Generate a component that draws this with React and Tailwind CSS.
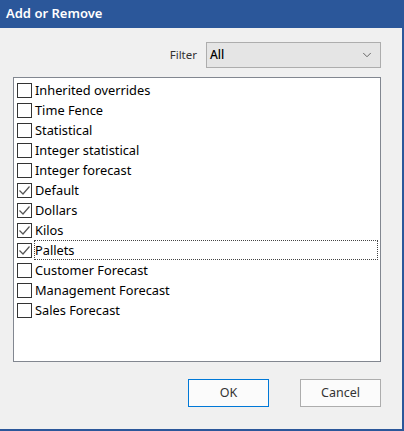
import { ChevronDown } from 'lucide-react'

const ITEMS = [
  { label: 'Inherited overrides', checked: false },
  { label: 'Time Fence', checked: false },
  { label: 'Statistical', checked: false },
  { label: 'Integer statistical', checked: false },
  { label: 'Integer forecast', checked: false },
  { label: 'Default', checked: true },
  { label: 'Dollars', checked: true },
  { label: 'Kilos', checked: true },
  { label: 'Pallets', checked: true, focused: true },
  { label: 'Customer Forecast', checked: false },
  { label: 'Management Forecast', checked: false },
  { label: 'Sales Forecast', checked: false },
]

function Check({ checked }) {
  return (
    <div className="w-[15px] h-[15px] shrink-0 border border-[#333] bg-white flex items-center justify-center">
      {checked && (
        <svg width="13" height="13" viewBox="0 0 13 13">
          <path d="M1.5 6.5 L5 10 L11.5 2.5" fill="none" stroke="#555" strokeWidth="1.2" />
        </svg>
      )}
    </div>
  )
}

export default function App() {
  return (
    <div className="w-[404px] h-[431px] bg-[#f0f0f0] flex flex-col font-['Noto_Sans',sans-serif] border-r-2 border-b-2 border-[#2b579a] overflow-hidden">
      <div className="h-[28px] shrink-0 bg-[#2b579a] flex items-center pl-[6px] text-white text-[13px] font-semibold">
        Add or Remove
      </div>
      <div className="flex-1 flex flex-col pl-[13px] pr-[21px]">
        <div className="flex items-center justify-end gap-[9px] mt-[14px] h-[26px]">
          <span className="text-[11.5px] text-[#333]">Filter</span>
          <div className="w-[175px] h-[26px] bg-[#e5e5e5] border border-[#adadad] flex items-center justify-between pl-[3px] pr-[6px]">
            <span className="text-[12px] text-black font-medium">All</span>
            <ChevronDown size={14} strokeWidth={1.5} className="text-[#555]" />
          </div>
        </div>
        <div className="mt-[9px] h-[285px] bg-white border border-[#828790] pt-[2px] pl-[3px] pr-[2px]">
          {ITEMS.map((item) => (
            <div key={item.label} className="h-[20px] flex items-center">
              <Check checked={item.checked} />
              <span
                className={`ml-[2px] flex-1 h-[20px] flex items-center text-[12.8px] text-black leading-none ${
                  item.focused ? 'border border-dotted border-[#444]' : 'border border-transparent'
                }`}
              >
                {item.label}
              </span>
            </div>
          ))}
        </div>
        <div className="flex justify-end gap-[31px] mt-[17px]">
          <button className="w-[81px] h-[28px] bg-[#fbfbfb] border border-[#0078d7] text-[12.5px] text-[#333]">
            OK
          </button>
          <button className="w-[81px] h-[28px] bg-[#fbfbfb] border border-[#adadad] text-[12.5px] text-[#333]">
            Cancel
          </button>
        </div>
      </div>
    </div>
  )
}
